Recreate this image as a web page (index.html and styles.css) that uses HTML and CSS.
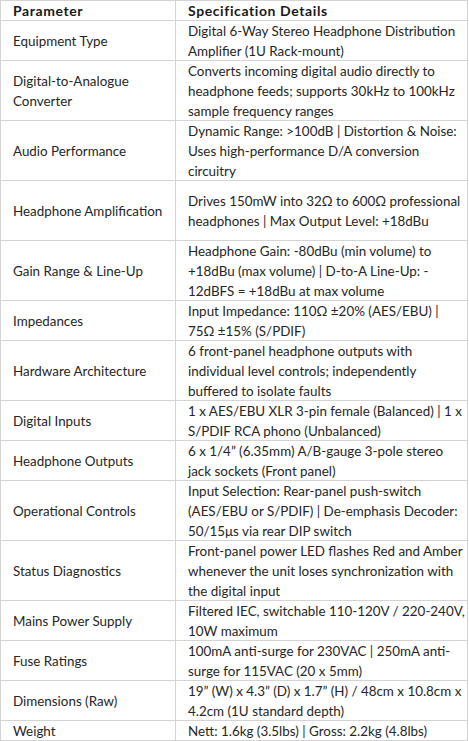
FILE: index.html
```html
<!DOCTYPE html>
<html>
<head>
<meta charset="utf-8">
<link rel="stylesheet" href="styles.css">
</head>
<body>
<div class="spec">
  <div class="cell head">Parameter</div>
  <div class="cell head">Specification Details</div>

  <div class="cell">Equipment Type</div>
  <div class="cell">Digital 6-Way Stereo Headphone Distribution<br>Amplifier (1U Rack-mount)</div>

  <div class="cell">Digital-to-Analogue<br>Converter</div>
  <div class="cell">Converts incoming digital audio directly to<br>headphone feeds; supports 30kHz to 100kHz<br>sample frequency ranges</div>

  <div class="cell">Audio Performance</div>
  <div class="cell">Dynamic Range: &gt;100dB | Distortion &amp; Noise:<br>Uses high-performance D/A conversion<br>circuitry</div>

  <div class="cell tall">Headphone Amplification</div>
  <div class="cell tall">Drives 150mW into 32Ω to 600Ω professional<br>headphones | Max Output Level: +18dBu</div>

  <div class="cell">Gain Range &amp; Line-Up</div>
  <div class="cell">Headphone Gain: -80dBu (min volume) to<br>+18dBu (max volume) | D-to-A Line-Up: -<br>12dBFS = +18dBu at max volume</div>

  <div class="cell">Impedances</div>
  <div class="cell">Input Impedance: 110Ω ±20% (AES/EBU) |<br>75Ω ±15% (S/PDIF)</div>

  <div class="cell">Hardware Architecture</div>
  <div class="cell">6 front-panel headphone outputs with<br>individual level controls; independently<br>buffered to isolate faults</div>

  <div class="cell">Digital Inputs</div>
  <div class="cell">1 x AES/EBU XLR 3-pin female (Balanced) | 1 x<br>S/PDIF RCA phono (Unbalanced)</div>

  <div class="cell">Headphone Outputs</div>
  <div class="cell">6 x 1/4” (6.35mm) A/B-gauge 3-pole stereo<br>jack sockets (Front panel)</div>

  <div class="cell">Operational Controls</div>
  <div class="cell">Input Selection: Rear-panel push-switch<br>(AES/EBU or S/PDIF) | De-emphasis Decoder:<br>50/15μs via rear DIP switch</div>

  <div class="cell">Status Diagnostics</div>
  <div class="cell">Front-panel power LED flashes Red and Amber<br>whenever the unit loses synchronization with<br>the digital input</div>

  <div class="cell">Mains Power Supply</div>
  <div class="cell">Filtered IEC, switchable 110-120V / 220-240V,<br>10W maximum</div>

  <div class="cell">Fuse Ratings</div>
  <div class="cell">100mA anti-surge for 230VAC | 250mA anti-<br>surge for 115VAC (20 x 5mm)</div>

  <div class="cell">Dimensions (Raw)</div>
  <div class="cell">19” (W) x 4.3” (D) x 1.7” (H) / 48cm x 10.8cm x<br>4.2cm (1U standard depth)</div>

  <div class="cell">Weight</div>
  <div class="cell">Nett: 1.6kg (3.5lbs) | Gross: 2.2kg (4.8lbs)</div>
</div>
</body>
</html>
```
FILE: styles.css
```css
html, body {
  margin: 0;
  padding: 0;
  background: #ffffff;
}

.spec {
  display: grid;
  grid-template-columns: 175px 292px;
  width: 467px;
  border-top: 1px solid #d4d4d4;
  border-left: 1px solid #d4d4d4;
  font-family: Lato, "Open Sans", sans-serif;
  font-size: 13.4px;
  line-height: 20px;
  color: #262626;
}

.cell {
  display: flex;
  flex-direction: column;
  justify-content: center;
  padding: 0 0 0 12px;
  white-space: nowrap;
  box-shadow: inset -1px -1px 0 #d4d4d4;
}

.head {
  font-size: 14px;
  font-weight: 700;
  letter-spacing: 0.6px;
  color: #1a1a1a;
}

.tall {
  min-height: 60px;
}
```
